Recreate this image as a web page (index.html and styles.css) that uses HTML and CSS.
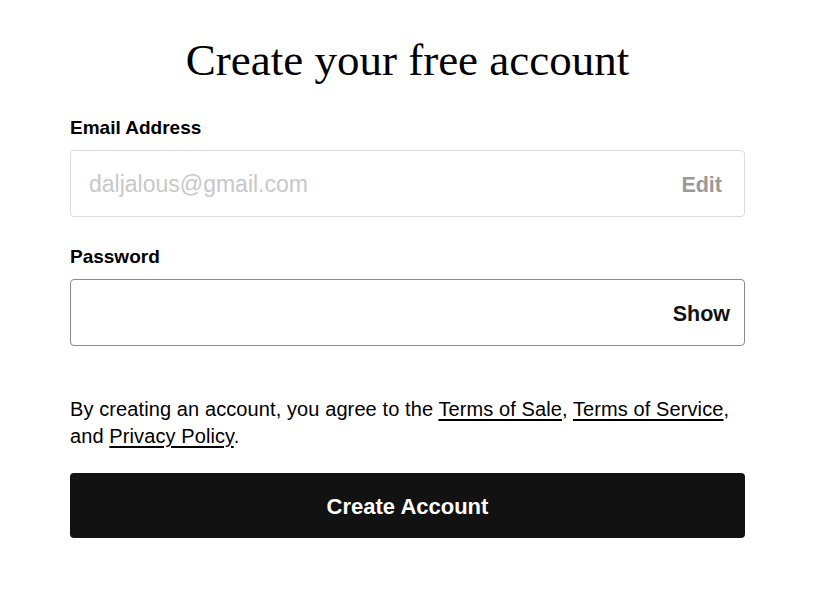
FILE: index.html
```html
<!DOCTYPE html>
<html>
<head>
<meta charset="utf-8">
<link rel="stylesheet" href="styles.css">
</head>
<body>
<main class="wrap">
  <h1 class="title">Create your free account</h1>
  <form class="form">
    <label class="label">Email Address</label>
    <div class="field field-disabled">
      <span class="value">daljalous@gmail.com</span>
      <span class="action action-muted">Edit</span>
    </div>
    <label class="label label-gap">Password</label>
    <div class="field field-active">
      <span class="value"></span>
      <span class="action">Show</span>
    </div>
    <p class="terms"><span>By creating an account, you agree to the </span><a href="#">Terms of Sale</a><span>, </span><a href="#">Terms of Service</a><span>,</span> <span>and </span><a href="#">Privacy Policy</a><span>.</span></p>
    <button type="button" class="submit">Create Account</button>
  </form>
</main>
</body>
</html>
```

FILE: styles.css
```css
html, body {
  margin: 0;
  padding: 0;
  background: #fff;
}
.wrap {
  width: 675px;
  padding-top: 34px;
  margin-left: 70px;
}
.title {
  margin: 0;
  font-family: "Liberation Serif", "Times New Roman", serif;
  font-weight: 400;
  font-size: 45px;
  line-height: 52px;
  text-align: center;
  color: #000;
}
.form {
  display: flex;
  flex-direction: column;
  margin-top: 30px;
}
.label {
  font-family: "Liberation Sans", Arial, sans-serif;
  font-weight: 700;
  font-size: 19px;
  line-height: 24px;
  color: #000;
  margin-bottom: 10px;
}
.label-gap {
  margin-top: 28px;
}
.field {
  box-sizing: border-box;
  height: 67px;
  border-radius: 4px;
  display: flex;
  align-items: center;
  justify-content: space-between;
  padding: 0 14px 0 18px;
}
.field-disabled {
  border: 1px solid #dcdcdc;
}
.field-active {
  border: 1px solid #8a8a8a;
}
.value {
  font-family: "Liberation Sans", Arial, sans-serif;
  font-size: 23px;
  color: #c8c8c8;
  padding-top: 2px;
}
.action {
  font-family: "Liberation Sans", Arial, sans-serif;
  font-weight: 700;
  font-size: 21.5px;
  color: #121212;
  padding-top: 3px;
}
.action-muted {
  color: #999;
  margin-right: 8px;
}
.terms {
  margin: 50px 0 0;
  font-family: "Liberation Sans", Arial, sans-serif;
  font-size: 20px;
  line-height: 27px;
  letter-spacing: 0.1px;
  color: #000;
}
.terms a {
  color: #000;
  text-decoration: underline;
  text-underline-offset: 3px;
}
.submit {
  margin-top: 23px;
  height: 65px;
  border: none;
  border-radius: 4px;
  background: #121212;
  color: #fff;
  font-family: "Liberation Sans", Arial, sans-serif;
  font-weight: 700;
  font-size: 22px;
  padding-top: 4px;
  cursor: pointer;
}
```
